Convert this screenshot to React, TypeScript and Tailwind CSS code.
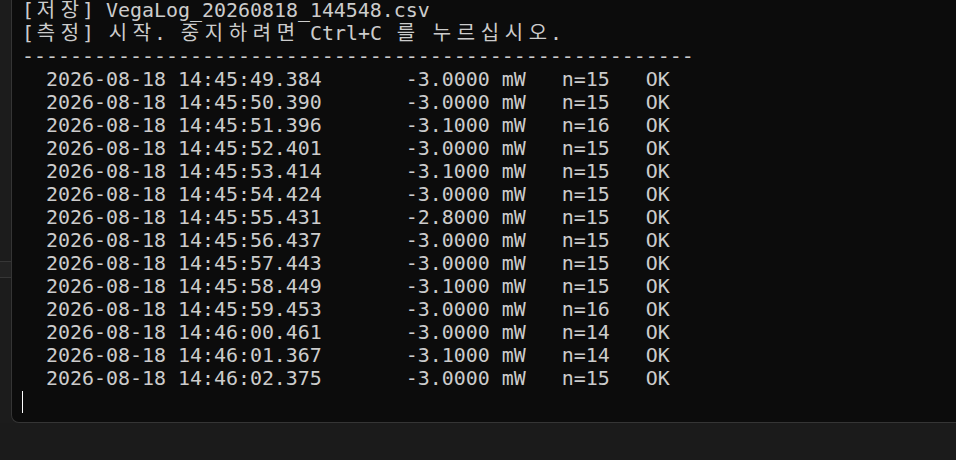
import React from "react";

const rows: [string, string, string, string][] = [
  ["2026-08-18 14:45:49.384", "-3.0000", "15", "OK"],
  ["2026-08-18 14:45:50.390", "-3.0000", "15", "OK"],
  ["2026-08-18 14:45:51.396", "-3.1000", "16", "OK"],
  ["2026-08-18 14:45:52.401", "-3.0000", "15", "OK"],
  ["2026-08-18 14:45:53.414", "-3.1000", "15", "OK"],
  ["2026-08-18 14:45:54.424", "-3.0000", "15", "OK"],
  ["2026-08-18 14:45:55.431", "-2.8000", "15", "OK"],
  ["2026-08-18 14:45:56.437", "-3.0000", "15", "OK"],
  ["2026-08-18 14:45:57.443", "-3.0000", "15", "OK"],
  ["2026-08-18 14:45:58.449", "-3.1000", "15", "OK"],
  ["2026-08-18 14:45:59.453", "-3.0000", "16", "OK"],
  ["2026-08-18 14:46:00.461", "-3.0000", "14", "OK"],
  ["2026-08-18 14:46:01.367", "-3.1000", "14", "OK"],
  ["2026-08-18 14:46:02.375", "-3.0000", "15", "OK"],
];

// korean glyphs take two terminal cells (24px)
const Cells: React.FC<{ text: string }> = ({ text }) => {
  const parts: React.ReactNode[] = [];
  let buf = "";
  Array.from(text).forEach((ch, i) => {
    if (ch.charCodeAt(0) >= 0x1100) {
      if (buf) parts.push(buf);
      buf = "";
      parts.push(
        <span key={i} className="inline-block w-[24px] text-center">
          {ch}
        </span>
      );
    } else {
      buf += ch;
    }
  });
  if (buf) parts.push(buf);
  return <>{parts}</>;
};

const Line: React.FC<{ text: string }> = ({ text }) => (
  <div className="h-[23px] leading-[23px] whitespace-pre">
    <Cells text={text} />
  </div>
);

export default function App() {
  return (
    <div className="w-[956px] h-[460px] overflow-hidden bg-[#1c1c1c] flex flex-col">
      <div className="flex h-[423px]">
        {/* window edge peeking out behind the terminal */}
        <div className="w-[11px] flex flex-col">
          <div className="h-[261px]" />
          <div className="h-px bg-[#363636]" />
          <div className="h-[15px] bg-[#222222]" />
          <div className="h-px bg-[#363636]" />
        </div>
        <div className="flex-1 bg-[#0c0c0c] border-l border-b border-[#353535] rounded-bl-[8px] overflow-hidden">
          <div
            className="pl-[10px] -mt-px text-[19.93px] text-[#cccccc]"
            style={{ fontFamily: '"DejaVu Sans Mono", "Noto Sans CJK KR", monospace' }}
          >
            <Line text="[저장] VegaLog_20260818_144548.csv" />
            <Line text="[측정] 시작. 중지하려면 Ctrl+C 를 누르십시오." />
            <Line text={"-".repeat(56)} />
            {rows.map(([ts, val, n, st]) => (
              <Line key={ts} text={`  ${ts}       ${val} mW   n=${n}   ${st}`} />
            ))}
            <div className="h-[23px] flex items-center">
              <div className="w-px h-[22px] bg-white" />
            </div>
          </div>
        </div>
      </div>
      <div className="flex-1 bg-[#1b1b1b]" />
    </div>
  );
}
